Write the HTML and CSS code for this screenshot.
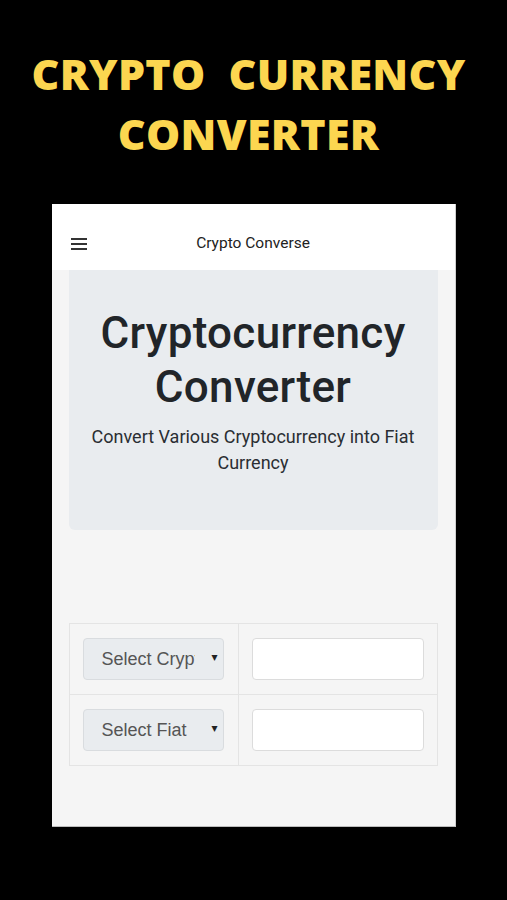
FILE: index.html
```html
<!DOCTYPE html>
<html lang="en">
  <head>
    <meta charset="UTF-8" />
    <meta name="viewport" content="width=device-width, initial-scale=1.0" />
    <title>Crypto Currency Converter</title>
    <link rel="stylesheet" href="styles.css">
  </head>

  <body>
    <h1 class="promoTitle">CRYPTO&nbsp; CURRENCY<br />CONVERTER</h1>

    <div class="screen">
      <header class="appBar">
        <span class="menuIcon">
          <span></span>
          <span></span>
          <span></span>
        </span>
        <span class="appName">Crypto Converse</span>
      </header>

      <main class="appBody">
        <div class="jumbotron">
          <h2 class="heroTitle">Cryptocurrency Converter</h2>
          <p class="heroText">Convert Various Cryptocurrency into Fiat Currency</p>
        </div>

        <table class="converter">
          <tr>
            <td>
              <div class="selectWrap">
                <select class="picker">
                  <option>Select Crypto</option>
                </select>
                <span class="caret">&#9662;</span>
              </div>
            </td>
            <td>
              <input type="text" class="amount" />
            </td>
          </tr>
          <tr>
            <td>
              <div class="selectWrap">
                <select class="picker">
                  <option>Select Fiat</option>
                </select>
                <span class="caret">&#9662;</span>
              </div>
            </td>
            <td>
              <input type="text" class="amount" />
            </td>
          </tr>
        </table>
      </main>
    </div>
  </body>
</html>
```

FILE: styles.css
```css
body {
  background-color: #000;
  margin: 0;
}

.promoTitle {
  margin: 0;
  padding: 44px 10px 0 0;
  color: #fcd650;
  font-family: "Open Sans", sans-serif;
  font-weight: 800;
  font-size: 43px;
  line-height: 60px;
  letter-spacing: 0.3px;
  text-align: center;
}

.screen {
  width: 404px;
  margin: 40px auto 0;
  background-color: #f5f5f5;
  border-right: 1px solid #cfcfcf;
  border-bottom: 1px solid #bcbcbc;
  box-sizing: border-box;
}

.appBar {
  height: 66px;
  background-color: #fff;
  display: flex;
  align-items: center;
  justify-content: center;
  position: relative;
}

.menuIcon {
  position: absolute;
  left: 19px;
  top: 34px;
  display: flex;
  flex-direction: column;
  gap: 3px;
}

.menuIcon span {
  display: block;
  width: 16px;
  height: 2px;
  background-color: #333;
}

.appName {
  font-family: Roboto, sans-serif;
  font-size: 15.5px;
  color: #222;
  padding-top: 12px;
}

.appBody {
  padding: 0 17px 60px;
}

.jumbotron {
  background-color: #e9ecef;
  border-radius: 0 0 6px 6px;
  padding: 36px 10px 54px;
  text-align: center;
  color: #212529;
  font-family: Roboto, sans-serif;
}

.heroTitle {
  margin: 0 0 10px;
  font-size: 44px;
  font-weight: 500;
  line-height: 54px;
  letter-spacing: 0.3px;
}

.heroText {
  margin: 0;
  font-size: 18px;
  line-height: 26px;
  color: #2a2e33;
}

.converter {
  width: 100%;
  margin-top: 93px;
  border-collapse: collapse;
}

.converter td {
  border: 1px solid #e4e4e4;
  padding: 14px 13px;
  height: 42px;
}

.converter td:first-child {
  width: 142px;
}

.selectWrap {
  position: relative;
  width: 141px;
}

.picker {
  appearance: none;
  -webkit-appearance: none;
  width: 141px;
  height: 42px;
  padding: 0 28px 0 18px;
  border: 1px solid #d9dcdf;
  border-radius: 4px;
  background-color: #e9ecef;
  color: #555;
  font-family: "Liberation Sans", Arial, sans-serif;
  font-size: 18px;
  display: block;
  overflow: hidden;
}

.caret {
  position: absolute;
  right: 6px;
  top: 12px;
  font-size: 12px;
  color: #222;
  font-family: "DejaVu Sans", sans-serif;
}

.amount {
  display: block;
  width: 100%;
  height: 42px;
  box-sizing: border-box;
  border: 1px solid #dcdcdc;
  border-radius: 4px;
  background-color: #fff;
  outline: none;
}
```
